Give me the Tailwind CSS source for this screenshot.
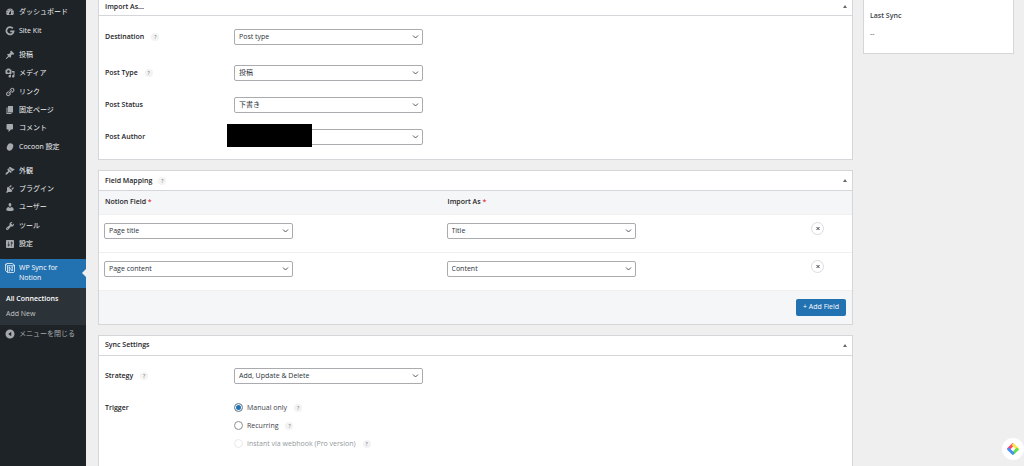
<!DOCTYPE html>
<html lang="ja">
<head>
  <meta charset="UTF-8">
  <title>WP Sync for Notion</title>
  <meta name="viewport" content="width=device-width, initial-scale=1">
  <script src="https://cdn.jsdelivr.net/npm/@tailwindcss/browser@4"></script>
</head>
<body class="h-screen overflow-hidden flex bg-[#efefef] text-[#3c434a] text-[7px] leading-[10px] font-['Open_Sans','Noto_Sans_CJK_JP',sans-serif]">

  <!-- Admin menu -->
  <nav class="w-[86px] shrink-0 bg-[#1d2327] text-[#f0f0f1] text-[7px]">
    <ul class="grid auto-rows-fr h-[37px] mt-[3px]">
      <li class="flex"><a href="#" class="flex items-center gap-1 pl-[5px] w-full">
        <svg class="size-[10px] shrink-0 fill-[#a7aaad]" viewBox="0 0 20 20"><path fill-rule="evenodd" d="M3.76 16h12.48c1.1-1.37 1.76-3.11 1.76-5 0-4.42-3.58-8-8-8s-8 3.58-8 8c0 1.89.66 3.63 1.76 5zM10 4c.55 0 1 .45 1 1s-.45 1-1 1-1-.45-1-1 .45-1 1-1zM6 6c.55 0 1 .45 1 1s-.45 1-1 1-1-.45-1-1 .45-1 1-1zm8 0c.55 0 1 .45 1 1s-.45 1-1 1-1-.45-1-1 .45-1 1-1zm-5.37 5.55L12 7v6c0 1.1-.9 2-2 2s-2-.9-2-2c0-.57.24-1.08.63-1.45zM4 10c.55 0 1 .45 1 1s-.45 1-1 1-1-.45-1-1 .45-1 1-1zm12 0c.55 0 1 .45 1 1s-.45 1-1 1-1-.45-1-1 .45-1 1-1z"/></svg>
        ダッシュボード</a></li>
      <li class="flex"><a href="#" class="flex items-center gap-1 pl-[5px] w-full">
        <svg class="size-[10px] shrink-0 fill-none stroke-[#a7aaad]" viewBox="0 0 20 20" stroke-width="3.500"><path d="M15.600 4.800A7.300 7.300 0 1 0 17.300 10.500H10.500"/></svg>
        Site Kit</a></li>
    </ul>
    <ul class="grid auto-rows-fr h-[110px] mt-[6px]">
      <li class="flex"><a href="#" class="flex items-center gap-1 pl-[5px] w-full">
        <svg class="size-[10px] shrink-0 fill-[#a7aaad]" viewBox="0 0 20 20"><path d="M10.44 3.02l1.82-1.82 6.36 6.35-1.83 1.82c-1.05-.68-2.48-.57-3.41.36l-.75.75c-.92.93-1.04 2.35-.35 3.41l-1.83 1.82-2.41-2.41-2.8 2.79c-.42.42-3.38 2.71-3.8 2.29s1.86-3.39 2.28-3.81l2.79-2.79L4.1 9.36l1.83-1.82c1.05.69 2.48.57 3.4-.36l.75-.75c.93-.92 1.05-2.35.36-3.41z"/></svg>
        投稿</a></li>
      <li class="flex"><a href="#" class="flex items-center gap-1 pl-[5px] w-full">
        <svg class="size-[10px] shrink-0 fill-[#a7aaad]" viewBox="0 0 20 20"><path fill-rule="evenodd" d="M13 11V4c0-.55-.45-1-1-1h-1.67L9 1H5L3.67 3H2c-.55 0-1 .45-1 1v7c0 .55.45 1 1 1h10c.55 0 1-.45 1-1zM7 4.5c1.38 0 2.5 1.12 2.5 2.5S8.38 9.5 7 9.5 4.5 8.38 4.5 7 5.62 4.5 7 4.5zM14 6h5v10.5c0 1.38-1.12 2.5-2.5 2.5S14 17.88 14 16.5s1.12-2.5 2.5-2.5c.17 0 .34.02.5.05V9h-3V6zm-4 8.05V13h2v3.5c0 1.38-1.12 2.5-2.5 2.5S7 17.88 7 16.5 8.12 14 9.5 14c.17 0 .34.02.5.05z"/></svg>
        メディア</a></li>
      <li class="flex"><a href="#" class="flex items-center gap-1 pl-[5px] w-full">
        <svg class="size-[10px] shrink-0 fill-[#a7aaad]" viewBox="0 0 20 20"><path d="M17.74 2.76c1.68 1.69 1.68 4.41 0 6.1l-1.53 1.52c-1.12 1.12-2.7 1.47-4.14 1.09l2.62-2.61.76-.77.76-.76c.84-.84.84-2.2 0-3.04-.84-.85-2.2-.85-3.04 0l-.77.76-3.38 3.38c-.37-1.44-.02-3.02 1.1-4.14l1.52-1.53c1.69-1.68 4.42-1.68 6.1 0zM8.59 13.43l5.34-5.34c.42-.42.42-1.1 0-1.52-.44-.43-1.13-.39-1.53 0l-5.33 5.34c-.42.42-.42 1.1 0 1.52.44.43 1.13.39 1.52 0zm-.76 2.29l4.14-4.15c.38 1.44.03 3.02-1.09 4.14l-1.52 1.53c-1.69 1.68-4.41 1.68-6.1 0-1.68-1.68-1.68-4.42 0-6.1l1.53-1.52c1.12-1.12 2.7-1.47 4.14-1.1l-4.14 4.15c-.85.84-.85 2.2 0 3.05.84.84 2.2.84 3.04 0z"/></svg>
        リンク</a></li>
      <li class="flex"><a href="#" class="flex items-center gap-1 pl-[5px] w-full">
        <svg class="size-[10px] shrink-0 fill-[#a7aaad]" viewBox="0 0 20 20"><path d="M6 15V2h10v13H6zm-1 1h8v2H3V5h2v11z"/></svg>
        固定ページ</a></li>
      <li class="flex"><a href="#" class="flex items-center gap-1 pl-[5px] w-full">
        <svg class="size-[10px] shrink-0 fill-[#a7aaad]" viewBox="0 0 20 20"><path d="M5 2h9c1.1 0 2 .9 2 2v7c0 1.1-.9 2-2 2h-2l-5 5v-5H5c-1.1 0-2-.9-2-2V4c0-1.1.9-2 2-2z"/></svg>
        コメント</a></li>
      <li class="flex"><a href="#" class="flex items-center gap-1 pl-[5px] w-full">
        <svg class="size-[10px] shrink-0 fill-[#a7aaad]" viewBox="0 0 20 20"><ellipse cx="10" cy="10" rx="6" ry="7.5" transform="rotate(25 10 10)"/></svg>
        Cocoon 設定</a></li>
    </ul>
    <ul class="grid auto-rows-fr h-[91px] mt-[6px]">
      <li class="flex"><a href="#" class="flex items-center gap-1 pl-[5px] w-full">
        <svg class="size-[10px] shrink-0 fill-[#a7aaad]" viewBox="0 0 20 20"><path d="M14.48 11.06L7.41 3.99l1.5-1.5c.5-.56 2.3-.47 3.51.32 1.21.8 1.43 1.28 2.91 2.1 1.18.64 2.45 1.26 4.45.85zm-.71.71L6.7 4.7 4.93 6.47c-.39.39-.39 1.02 0 1.41l1.06 1.06c.39.39.39 1.03 0 1.42-.6.6-1.43 1.11-2.21 1.69-.35.26-.7.53-1.01.84C1.43 14.23.4 16.08 1.4 17.07c.99 1 2.84-.03 4.18-1.36.31-.31.58-.66.85-1.02.57-.78 1.08-1.61 1.69-2.21.39-.39 1.02-.39 1.41 0l1.06 1.06c.39.39 1.02.39 1.41 0z"/></svg>
        外観</a></li>
      <li class="flex"><a href="#" class="flex items-center gap-1 pl-[5px] w-full">
        <svg class="size-[10px] shrink-0 fill-[#a7aaad]" viewBox="0 0 20 20"><path d="M13.11 4.36L9.87 7.6 8 5.73l3.24-3.24c.35-.34 1.05-.2 1.56.32.52.51.66 1.21.31 1.55zm-8 1.77l.91-1.12 9.01 9.01-1.19.84c-.71.71-2.63 1.16-3.82 1.16H6.14L4.9 17.26c-.59.59-1.54.59-2.12 0-.59-.58-.59-1.53 0-2.12l1.24-1.24v-3.88c0-1.13.4-3.19 1.09-3.89zm7.26 3.97l3.24-3.24c.34-.35 1.04-.21 1.55.31.52.51.66 1.21.31 1.55l-3.24 3.25z"/></svg>
        プラグイン</a></li>
      <li class="flex"><a href="#" class="flex items-center gap-1 pl-[5px] w-full">
        <svg class="size-[10px] shrink-0 fill-[#a7aaad]" viewBox="0 0 20 20"><path d="M10 9.25c-2.27 0-2.73-3.44-2.73-3.44C7 4.02 7.82 2 9.97 2c2.16 0 2.98 2.02 2.71 3.81 0 0-.41 3.44-2.68 3.44zm0 2.57L12.72 10c2.39 0 4.52 2.33 4.52 4.53v2.49s-3.65 1.13-7.24 1.13c-3.65 0-7.24-1.13-7.24-1.13v-2.49c0-2.25 1.94-4.48 4.47-4.48z"/></svg>
        ユーザー</a></li>
      <li class="flex"><a href="#" class="flex items-center gap-1 pl-[5px] w-full">
        <svg class="size-[10px] shrink-0 fill-[#a7aaad]" viewBox="0 0 20 20"><path d="M16.68 9.77c-1.34 1.34-3.3 1.67-4.95.99l-5.41 6.52c-.99.99-2.59.99-3.58 0s-.99-2.59 0-3.57l6.52-5.42c-.68-1.65-.35-3.61.99-4.95 1.28-1.28 3.12-1.62 4.72-1.06l-2.89 2.89 2.82 2.82 2.86-2.87c.53 1.58.18 3.39-1.08 4.65zM3.81 16.21c.4.39 1.04.39 1.43 0 .4-.4.4-1.04 0-1.43-.39-.4-1.03-.4-1.43 0-.39.39-.39 1.03 0 1.43z"/></svg>
        ツール</a></li>
      <li class="flex"><a href="#" class="flex items-center gap-1 pl-[5px] w-full">
        <svg class="size-[10px] shrink-0 fill-[#a7aaad]" viewBox="0 0 20 20"><path fill-rule="evenodd" d="M18 16V4c0-1.1-.9-2-2-2H4c-1.1 0-2 .9-2 2v12c0 1.1.9 2 2 2h12c1.1 0 2-.9 2-2zM8 11h1c.55 0 1 .45 1 1s-.45 1-1 1H8v1.5c0 .28-.22.5-.5.5s-.5-.22-.5-.5V13H6c-.55 0-1-.45-1-1s.45-1 1-1h1V5.5c0-.28.22-.5.5-.5s.5.22.5.5V11zm5-2h-1c-.55 0-1-.45-1-1s.45-1 1-1h1V5.5c0-.28.22-.5.5-.5s.5.22.5.5V7h1c.55 0 1 .45 1 1s-.45 1-1 1h-1v5.5c0 .28-.22.5-.5.5s-.5-.22-.5-.5V9z"/></svg>
        設定</a></li>
    </ul>

    <!-- Current item + submenu -->
    <a href="#" class="relative flex gap-1 mt-[6px] h-[29px] pl-[5px] pt-1 bg-[#2271b1] text-white">
      <svg class="size-[10px] shrink-0 fill-none stroke-white" viewBox="0 0 20 20" stroke-width="1.500"><path d="M1 2.500 3 1h11.500L19 4v13.500L17.500 19 4.500 18.700 1 15z"/><path d="M1.500 2 5 5.500h13.500M5 5.500v13"/><path d="M8.500 16V8.500l6 7.500V8M7.500 8.500h2M7.500 16h2.500M13 8h3"/></svg>
      <span>WP Sync for<br>Notion</span>
      <span class="absolute right-0 top-[10px] border-y-4 border-r-4 border-y-transparent border-r-[#efefef]"></span>
    </a>
    <ul class="bg-[#2c3338] h-[37px] pt-[3px] pl-[6px] leading-[15px] text-[#c3c4c7]">
      <li><a href="#" class="font-semibold text-white">All Connections</a></li>
      <li><a href="#">Add New</a></li>
    </ul>
    <button type="button" class="flex items-center gap-1 pl-[5px] w-full h-[18px] text-[#a7aaad]">
      <svg class="size-[10px] shrink-0 fill-[#a7aaad]" viewBox="0 0 20 20"><path fill-rule="evenodd" d="M10 1a9 9 0 1 1 0 18 9 9 0 0 1 0-18zm2.500 4.500L6.500 10l6 4.500z"/></svg>
      メニューを閉じる
    </button>
  </nav>

  <main class="flex-1 flex items-start gap-[10px] pl-3 pr-[10px]">
    <div class="flex-1 flex flex-col gap-[10px]">

      <!-- Import As -->
      <section class="bg-white border border-t-0 border-[#d5d6d9]">
        <div class="flex items-center justify-between h-4 pb-[2px] pl-[6px] pr-[5px] border-b border-[#d5d6d9]">
          <h2 class="font-semibold text-[#1d2327]">Import As...</h2>
          <button type="button" aria-label="Toggle Import As"><svg class="w-1 h-[3px] fill-[#646970]" viewBox="0 0 4 3"><path d="M2 0 4 3H0z"/></svg></button>
        </div>
        <div class="pt-[13px] pb-[14px] pl-[6px]">
          <div class="flex items-center h-4 mb-5">
            <div class="w-[129px] flex items-center gap-[7px]">
              <label for="destination" class="font-semibold text-[#1d2327]">Destination</label>
              <span class="size-2 rounded-full bg-[#f3f3f4] text-[5px] leading-2 text-center text-[#646970]">?</span>
            </div>
            <div class="relative w-[189px]">
              <select id="destination" class="block w-full h-4 pl-1 appearance-none bg-white border border-[#a9abae] rounded-[2px] text-[#2c3338]"><option>Post type</option></select>
              <svg class="absolute right-1 top-[5px] w-[7px] h-[6px] fill-none stroke-[#50575e] pointer-events-none" viewBox="0 0 7 6"><path d="M1 1.500 3.500 4 6 1.500"/></svg>
            </div>
          </div>
          <div class="flex items-center h-4 mb-4">
            <div class="w-[129px] flex items-center gap-[7px]">
              <label for="post-type" class="font-semibold text-[#1d2327]">Post Type</label>
              <span class="size-2 rounded-full bg-[#f3f3f4] text-[5px] leading-2 text-center text-[#646970]">?</span>
            </div>
            <div class="relative w-[189px]">
              <select id="post-type" class="block w-full h-4 pl-1 appearance-none bg-white border border-[#a9abae] rounded-[2px] text-[#2c3338]"><option>投稿</option></select>
              <svg class="absolute right-1 top-[5px] w-[7px] h-[6px] fill-none stroke-[#50575e] pointer-events-none" viewBox="0 0 7 6"><path d="M1 1.500 3.500 4 6 1.500"/></svg>
            </div>
          </div>
          <div class="flex items-center h-4 mb-4">
            <div class="w-[129px]">
              <label for="post-status" class="font-semibold text-[#1d2327]">Post Status</label>
            </div>
            <div class="relative w-[189px]">
              <select id="post-status" class="block w-full h-4 pl-1 appearance-none bg-white border border-[#a9abae] rounded-[2px] text-[#2c3338]"><option>下書き</option></select>
              <svg class="absolute right-1 top-[5px] w-[7px] h-[6px] fill-none stroke-[#50575e] pointer-events-none" viewBox="0 0 7 6"><path d="M1 1.500 3.500 4 6 1.500"/></svg>
            </div>
          </div>
          <div class="flex items-center h-4">
            <div class="w-[129px]">
              <label for="post-author" class="font-semibold text-[#1d2327]">Post Author</label>
            </div>
            <div class="relative w-[189px]">
              <select id="post-author" class="block w-full h-4 pl-1 appearance-none bg-white border border-[#a9abae] rounded-[2px] text-[#2c3338]"><option></option></select>
              <svg class="absolute right-1 top-[5px] w-[7px] h-[6px] fill-none stroke-[#50575e] pointer-events-none" viewBox="0 0 7 6"><path d="M1 1.500 3.500 4 6 1.500"/></svg>
              <!-- Author name is hidden -->
              <span class="absolute -left-[7px] -top-[5px] w-[85px] h-[23px] bg-black"></span>
            </div>
          </div>
        </div>
      </section>

      <!-- Field Mapping -->
      <section class="bg-white border border-[#d5d6d9]">
        <div class="flex items-center justify-between h-5 pl-[6px] pr-[5px] border-b border-[#d5d6d9]">
          <div class="flex items-center gap-[6px]">
            <h2 class="font-semibold text-[#1d2327]">Field Mapping</h2>
            <span class="size-2 rounded-full bg-[#f3f3f4] text-[5px] leading-2 text-center text-[#646970]">?</span>
          </div>
          <button type="button" aria-label="Toggle Field Mapping"><svg class="w-1 h-[3px] fill-[#646970]" viewBox="0 0 4 3"><path d="M2 0 4 3H0z"/></svg></button>
        </div>
        <table class="w-full table-fixed text-left">
          <thead class="bg-[#f5f6f8]">
            <tr class="h-[23px] border-b border-[#f0f0f1]">
              <th class="pl-[6px] font-semibold text-[#1d2327]">Notion Field <span class="text-[#e8383b]">*</span></th>
              <th class="pl-[6px] font-semibold text-[#1d2327]">Import As <span class="text-[#e8383b]">*</span></th>
              <th class="w-[68px]"></th>
            </tr>
          </thead>
          <tbody>
            <tr class="h-[38px] align-top border-b border-[#f0f0f1]">
              <td class="pl-[5px] pt-2">
                <div class="relative w-[189px]">
                  <select aria-label="Notion field 1" class="block w-full h-4 pl-1 appearance-none bg-white border border-[#a9abae] rounded-[2px] text-[#2c3338]"><option>Page title</option></select>
                  <svg class="absolute right-1 top-[5px] w-[7px] h-[6px] fill-none stroke-[#50575e] pointer-events-none" viewBox="0 0 7 6"><path d="M1 1.500 3.500 4 6 1.500"/></svg>
                </div>
              </td>
              <td class="pl-[5px] pt-2">
                <div class="relative w-[189px]">
                  <select aria-label="Import as 1" class="block w-full h-4 pl-1 appearance-none bg-white border border-[#a9abae] rounded-[2px] text-[#2c3338]"><option>Title</option></select>
                  <svg class="absolute right-1 top-[5px] w-[7px] h-[6px] fill-none stroke-[#50575e] pointer-events-none" viewBox="0 0 7 6"><path d="M1 1.500 3.500 4 6 1.500"/></svg>
                </div>
              </td>
              <td class="pl-[27px] pt-[7px]">
                <button type="button" aria-label="Remove field" class="flex items-center justify-center size-[13px] rounded-full border border-[#dcdcde]"><svg class="w-1 h-[3px] stroke-[#3c434a]" viewBox="0 0 4 3"><path d="M.5 0l3 3M3.500 0l-3 3"/></svg></button>
              </td>
            </tr>
            <tr class="h-[38px] align-top border-b border-[#f0f0f1]">
              <td class="pl-[5px] pt-2">
                <div class="relative w-[189px]">
                  <select aria-label="Notion field 2" class="block w-full h-4 pl-1 appearance-none bg-white border border-[#a9abae] rounded-[2px] text-[#2c3338]"><option>Page content</option></select>
                  <svg class="absolute right-1 top-[5px] w-[7px] h-[6px] fill-none stroke-[#50575e] pointer-events-none" viewBox="0 0 7 6"><path d="M1 1.500 3.500 4 6 1.500"/></svg>
                </div>
              </td>
              <td class="pl-[5px] pt-2">
                <div class="relative w-[189px]">
                  <select aria-label="Import as 2" class="block w-full h-4 pl-1 appearance-none bg-white border border-[#a9abae] rounded-[2px] text-[#2c3338]"><option>Content</option></select>
                  <svg class="absolute right-1 top-[5px] w-[7px] h-[6px] fill-none stroke-[#50575e] pointer-events-none" viewBox="0 0 7 6"><path d="M1 1.500 3.500 4 6 1.500"/></svg>
                </div>
              </td>
              <td class="pl-[27px] pt-[7px]">
                <button type="button" aria-label="Remove field" class="flex items-center justify-center size-[13px] rounded-full border border-[#dcdcde]"><svg class="w-1 h-[3px] stroke-[#3c434a]" viewBox="0 0 4 3"><path d="M.5 0l3 3M3.500 0l-3 3"/></svg></button>
              </td>
            </tr>
          </tbody>
        </table>
        <div class="flex justify-end items-center h-[33px] pr-[6px] bg-[#f5f6f8]">
          <button type="button" class="w-[50px] h-[17px] rounded-[2px] bg-[#2271b1] text-white">+ Add Field</button>
        </div>
      </section>

      <!-- Sync Settings -->
      <section class="bg-white border border-[#d5d6d9]">
        <div class="flex items-center justify-between h-5 pl-[6px] pr-[5px] border-b border-[#d5d6d9]">
          <h2 class="font-semibold text-[#1d2327]">Sync Settings</h2>
          <button type="button" aria-label="Toggle Sync Settings"><svg class="w-1 h-[3px] fill-[#646970]" viewBox="0 0 4 3"><path d="M2 0 4 3H0z"/></svg></button>
        </div>
        <div class="pt-3 pb-10 pl-[6px]">
          <div class="flex items-center h-4 mb-[19px]">
            <div class="w-[129px] flex items-center gap-[7px]">
              <label for="strategy" class="font-semibold text-[#1d2327]">Strategy</label>
              <span class="size-2 rounded-full bg-[#f3f3f4] text-[5px] leading-2 text-center text-[#646970]">?</span>
            </div>
            <div class="relative w-[189px]">
              <select id="strategy" class="block w-full h-4 pl-1 appearance-none bg-white border border-[#a9abae] rounded-[2px] text-[#2c3338]"><option>Add, Update &amp; Delete</option></select>
              <svg class="absolute right-1 top-[5px] w-[7px] h-[6px] fill-none stroke-[#50575e] pointer-events-none" viewBox="0 0 7 6"><path d="M1 1.500 3.500 4 6 1.500"/></svg>
            </div>
          </div>
          <fieldset class="flex items-start">
            <div id="trigger-label" class="w-[129px] font-semibold text-[#1d2327]">Trigger</div>
            <div role="radiogroup" aria-labelledby="trigger-label" class="flex flex-col gap-2">
              <div class="flex items-center gap-[7px]">
                <label class="flex items-center gap-1"><input type="radio" name="trigger" checked class="appearance-none size-[9px] rounded-full border border-[#8c8f94] bg-white checked:bg-[#2271b1] checked:shadow-[inset_0_0_0_1px_#fff]">Manual only</label>
                <span class="size-2 rounded-full bg-[#f3f3f4] text-[5px] leading-2 text-center text-[#646970]">?</span>
              </div>
              <div class="flex items-center gap-[7px]">
                <label class="flex items-center gap-1"><input type="radio" name="trigger" class="appearance-none size-[9px] rounded-full border border-[#8c8f94] bg-white">Recurring</label>
                <span class="size-2 rounded-full bg-[#f3f3f4] text-[5px] leading-2 text-center text-[#646970]">?</span>
              </div>
              <div class="flex items-center gap-[7px]">
                <label class="flex items-center gap-1 text-[#94989c]"><input type="radio" name="trigger" disabled class="appearance-none size-[9px] rounded-full border border-[#e8e9ea] bg-white">Instant via webhook (Pro version)</label>
                <span class="size-2 rounded-full bg-[#f3f3f4] text-[5px] leading-2 text-center text-[#646970]">?</span>
              </div>
            </div>
          </fieldset>
        </div>
      </section>
    </div>

    <!-- Sync status -->
    <aside class="w-[151px] h-[54px] shrink-0 bg-white border border-t-0 border-[#d5d6d9] pt-[11px] pl-[6px]">
      <h3 class="font-semibold">Last Sync</h3>
      <p class="mt-2">--</p>
    </aside>
  </main>

  <!-- Floating widget -->
  <button type="button" aria-label="Open widget" class="fixed right-0 bottom-[6px] flex items-center justify-center size-[22px] rounded-full bg-white">
    <svg class="size-[14px]" viewBox="0 0 14 14" fill="none" stroke-width="3"><path d="M2 7.500 7.500 2" stroke="#f8476b"/><path d="M6.500 2 12 7.500" stroke="#fbe64d"/><path d="M12 6.500 6.500 12" stroke="#5fe04f"/><path d="M7.500 12 2 6.500" stroke="#4a8df8"/></svg>
  </button>

</body>
</html>
